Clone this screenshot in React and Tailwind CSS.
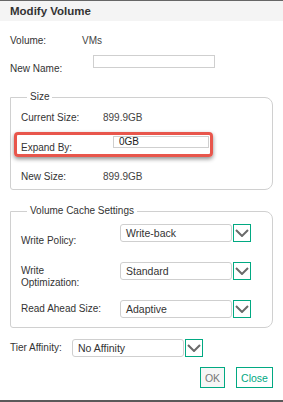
import React from 'react';

function Chevron() {
    return (
        <div className="w-[18px] h-[18px] border border-[#01a982] bg-white flex items-center justify-center shrink-0">
            <svg width="14" height="8" viewBox="0 0 14 8">
                <path d="M1 1 L7 7 L13 1" fill="none" stroke="#6a6a6a" strokeWidth="2" />
            </svg>
        </div>
    );
}

function Select({ value, width }) {
    return (
        <div className="flex items-start gap-[1px]">
            <div
                className="h-[18px] border border-[#cfcfcf] rounded-[3px] bg-white pl-[5px] flex items-center text-[10.5px] text-[#333]"
                style={{ width }}
            >
                {value}
            </div>
            <Chevron />
        </div>
    );
}

export default function App() {
    return (
        <div className="w-[283px] h-[402px] bg-white flex flex-col font-['Liberation_Sans',Arial,sans-serif] text-[10px] leading-[12px] text-[#333] overflow-hidden">
            {/* Header */}
            <div className="h-[21px] bg-[#f4f4f4] border-t border-[#666] pl-[10px] flex items-center">
                <span className="text-[11.5px] font-bold text-[#333]">Modify Volume</span>
            </div>

            <div className="px-[10px] flex flex-col">
                {/* Volume */}
                <div className="h-[16px] mt-[12px] flex items-center">
                    <span className="w-[72px]">Volume:</span>
                    <span className="text-[#444]">VMs</span>
                </div>

                {/* New Name */}
                <div className="h-[20px] mt-[6px] flex">
                    <span className="w-[83px] self-end">New Name:</span>
                    <div className="w-[122px] h-[13px] border border-[#cfcfcf] bg-white" />
                </div>

                {/* Size */}
                <fieldset className="mt-[16px] border border-[#d0d0d0] rounded-tr-[8px] rounded-br-[8px] rounded-bl-[3px] pl-[10px] pr-[10px] pb-[2px]">
                    <legend className="ml-[6px] px-[3px] leading-[12px]">Size</legend>
                    <div className="h-[20px] mt-[5px] flex items-center">
                        <span className="w-[82px]">Current Size:</span>
                        <span className="text-[#444]">899.9GB</span>
                    </div>
                    <div className="h-[30px] flex relative">
                        <span className="w-[92px] self-end mb-[4px]">Expand By:</span>
                        <div className="w-[96px] h-[12px] mt-[8px] border border-[#cfcfcf] bg-white pl-[5px] flex items-center text-[10px] text-[#222]">
                            0GB
                        </div>
                        <div className="absolute left-[-7px] top-[4px] w-[199px] h-[25px] border-[3px] border-[#e8564c] rounded-[4px] shadow-[0_2px_4px_rgba(0,0,0,0.45)]" />
                    </div>
                    <div className="h-[20px] mt-[9px] flex items-center">
                        <span className="w-[82px]">New Size:</span>
                        <span className="text-[#444]">899.9GB</span>
                    </div>
                </fieldset>

                {/* Volume Cache Settings */}
                <fieldset className="mt-[15px] border border-[#d0d0d0] rounded-tr-[8px] rounded-br-[8px] rounded-bl-[3px] pl-[10px] pr-[10px] pb-[9px]">
                    <legend className="ml-[6px] px-[3px] leading-[12px]">Volume Cache Settings</legend>
                    <div className="h-[23px] mt-[7px] flex">
                        <span className="w-[99px] self-end">Write Policy:</span>
                        <Select value="Write-back" width={112} />
                    </div>
                    <div className="h-[27px] mt-[15px] flex">
                        <span className="w-[99px] self-end">Write<br />Optimization:</span>
                        <Select value="Standard" width={112} />
                    </div>
                    <div className="h-[18px] mt-[11px] flex">
                        <span className="w-[99px] self-center">Read Ahead Size:</span>
                        <Select value="Adaptive" width={112} />
                    </div>
                </fieldset>

                {/* Tier Affinity */}
                <div className="h-[18px] mt-[11px] flex">
                    <span className="w-[62px] self-center">Tier Affinity:</span>
                    <Select value="No Affinity" width={112} />
                </div>

                {/* Buttons */}
                <div className="mt-[10px] flex justify-end gap-[11px]">
                    <button className="w-[25px] h-[21px] border border-[#01a982] bg-[#f6f6f6] text-[#777] text-[10.5px] flex items-center justify-center">
                        OK
                    </button>
                    <button className="w-[37px] h-[21px] border border-[#01a982] bg-white text-[#01a982] text-[10.5px] flex items-center justify-center">
                        Close
                    </button>
                </div>
            </div>

            <div className="mt-auto h-[2px] bg-[#5a5a5a]" />
        </div>
    );
}
